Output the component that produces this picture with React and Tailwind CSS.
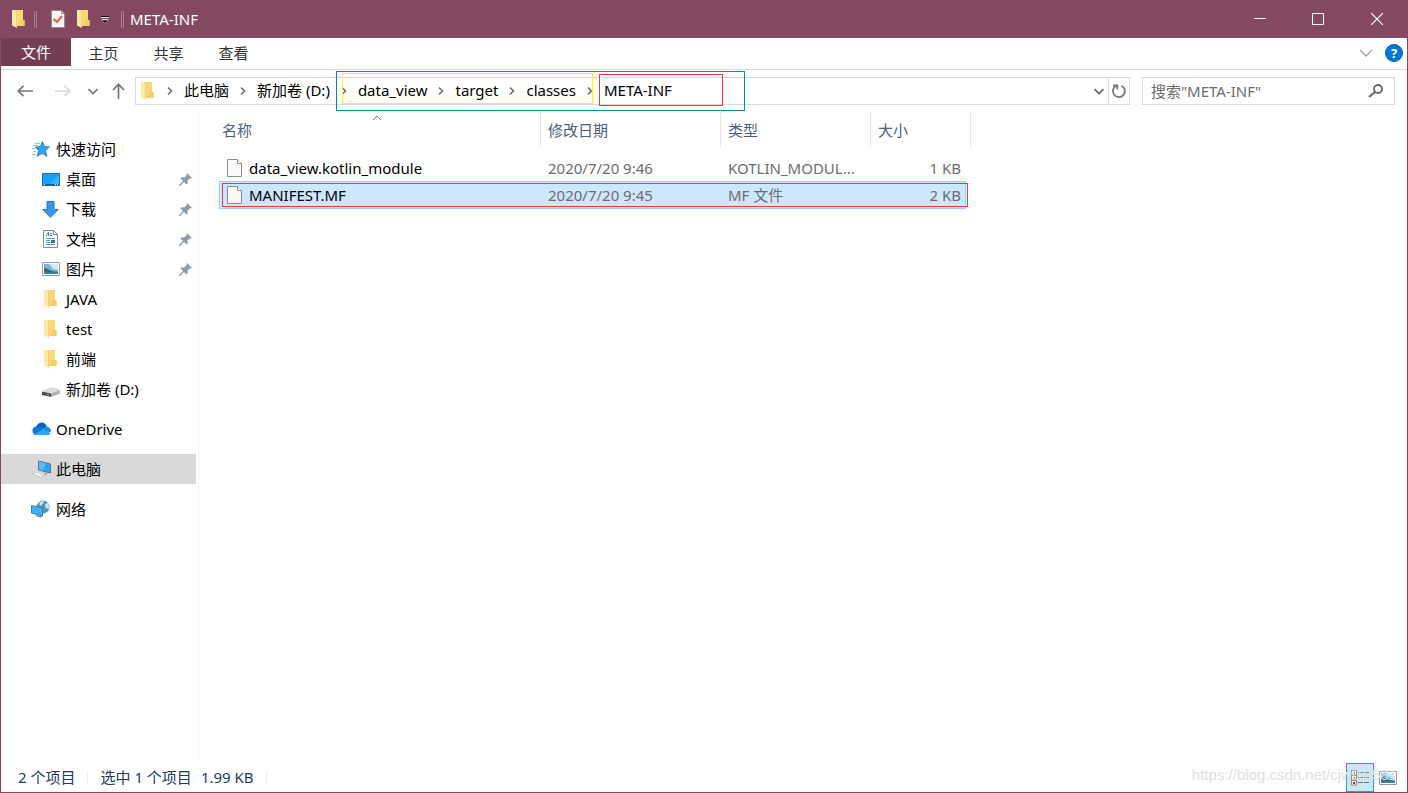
import clsx from 'clsx';

const Svg = ({ w, h, className, children }) => (
  <svg width={w} height={h} viewBox={`0 0 ${w} ${h}`} className={clsx('block shrink-0', className)} aria-hidden="true">
    {children}
  </svg>
);

const FolderIcon = ({ className }) => (
  <Svg w={14} h={18} className={className}>
    <path d="M3 0h8v10h1.500v6H3z" fill="#f8d775" />
    <path d="M9 10h3.500v6H6z" fill="#f4cd66" />
    <path d="M0 0h2.500L5 2.500V18L0 15.500z" fill="#ffe9a6" />
    <path d="M4.500 2.500V17.500" stroke="#edc766" strokeWidth=".7" />
  </Svg>
);

const FileIcon = () => (
  <Svg w={15} h={18}>
    <path d="M.5.5h10l4 4v13H.5z" fill="#f9f9f9" stroke="#8c8c8c" />
    <path d="M10.500.5v4h4" fill="#fff" stroke="#8c8c8c" />
  </Svg>
);

const PropertiesIcon = () => (
  <Svg w={14} h={18}>
    <path d="M.5.5h10l3 3v14H.5z" fill="#f8f8f8" stroke="#8f8f8f" />
    <path d="M10.500.5v3h3z" fill="#ddd" stroke="#8f8f8f" />
    <path d="m2.500 9 3.500 3 5-6" fill="none" stroke="#e8622c" strokeWidth="2" />
  </Svg>
);

const Chevron = ({ dir = 'right', className }) => (
  <Svg w={10} h={10} className={className}>
    <path
      d={dir === 'right' ? 'M3 1.500 6.500 5 3 8.500' : 'M.500 3 5 7.500 9.500 3'}
      fill="none"
      stroke="currentColor"
      strokeWidth="1.7"
    />
  </Svg>
);

const StarIcon = () => (
  <Svg w={18} h={16}>
    <path d="m10.500.500 2 5 5 .3-4 3.700 1.400 5.800-4.900-3-4.800 3 1.400-5.600L3.500 6l4.800-.5z" fill="#2ea3ea" stroke="#1a7fc4" strokeWidth=".8" />
    <path d="M3 2.500h5M1 4.500h5M0 7.500h3M1 10.500h3M0 13.500h4" stroke="#7ec4ee" />
  </Svg>
);

const DesktopIcon = () => (
  <Svg w={18} h={13}>
    <path d="M.5.5h17v12H.5z" fill="#1a9fff" stroke="#1572b8" />
    <path d="M8 11 17 2v9z" fill="#3db1ff" />
    <path d="M1 11.500h16" stroke="#0b5a9e" />
    <path d="M2 11.500h1M13 11.500h1M15 11.500h1" stroke="#fff" />
  </Svg>
);

const DownloadIcon = () => (
  <Svg w={17} h={17}>
    <path d="M5 .5h7v8h4.200L8.500 16.300.8 8.500H5z" fill="#3c96e6" stroke="#2878c8" />
  </Svg>
);

const DocumentIcon = () => (
  <Svg w={15} h={18}>
    <path d="M.5.5h10l4 4v13H.5z" fill="#fff" stroke="#8c8c8c" />
    <path d="M10.500.5v4h4" fill="none" stroke="#8c8c8c" />
    <path d="M3 6l2.500-4v4M7 3.500h2M7 5.500h2" fill="none" stroke="#2b8ac9" />
    <path d="M3 8.500h9M3 10.500h4M3 12.500h4M3 14.500h9" stroke="#55a0cf" />
    <path d="M8 10h4v3H8z" fill="#3d6f94" />
  </Svg>
);

const PictureIcon = () => (
  <Svg w={18} h={14}>
    <path d="M.5.5h17v13H.5z" fill="#fff" stroke="#9c9c9c" />
    <path d="M2 2h14v10H2z" fill="#6db5ee" />
    <path d="M7 2h9v6l-5-1z" fill="#d3eafa" />
    <path d="M2 5.500c3 .5 5 3 8 3.500l6 1V11H2z" fill="#396b58" />
    <path d="M2 10.500h14V12H2z" fill="#3c86bd" />
  </Svg>
);

const DriveIcon = () => (
  <Svg w={18} h={10} className="mt-[6px]">
    <path d="M0 4.500 8 .5h5l5 2.500-9 3.500z" fill="#dcdcdc" />
    <path d="m0 4.500 9 2V10L0 8z" fill="#4d4d4d" />
    <path d="m9 6.500 9-3.500v3.500L9 10z" fill="#b0b0b0" />
    <path d="M5 7.500 7 8" stroke="#4be04b" strokeWidth="1.200" />
  </Svg>
);

const OneDriveIcon = () => (
  <Svg w={20} h={14}>
    <path d="M5 5C7-.5 14-1.500 16 5l-6 4z" fill="#0a63b5" />
    <path d="M4.500 13A4.400 4.400 0 0 1 5 4.500c3-.3 5 2 8 3.500l-7 5z" fill="#0f7ad6" />
    <path d="M10 7.500 14 5c4-1 6 2 6 4.500l-3 1z" fill="#1490df" />
    <path d="M2.500 12.300 12 7.500l7.500 3.500c-.5 1.500-1.500 2-3 2h-12z" fill="#28a8ea" />
  </Svg>
);

const ComputerIcon = () => (
  <Svg w={20} h={18}>
    <path d="m7.500 1 12 3v9l-12-3z" fill="#2da5f5" stroke="#63737e" />
    <path d="m8 1.500 7 1.800-3 7.200-4-1z" fill="#58bbfa" />
    <path d="m13 12.500 3 1.300-3 1.200" fill="none" stroke="#8fa0ab" />
    <path d="m1 13.500 5-1.500 6 3.500-2 1.500z" fill="#f3f5f6" stroke="#aab4ba" strokeWidth=".7" strokeDasharray="2 1" />
  </Svg>
);

const NetworkIcon = () => (
  <Svg w={19} h={18}>
    <circle cx="12" cy="7" r="6.500" fill="#4f93b8" />
    <path d="M8 3c2-2 4-2 5-2l-1 3-3 2zM14 4l3-1c1 2 1.500 4 .5 6l-3-1z" fill="#c5e3ee" />
    <path d="m.5 5.500 11 2.500v8L.5 13z" fill="#3db0f8" stroke="#3f7ea8" />
    <path d="m5 15.500 6 1.700" stroke="#7d8b94" strokeWidth="1.300" />
  </Svg>
);

const PinIcon = () => (
  <Svg w={13} h={13}>
    <path d="m8 0 5 5-1.500.5-.5-.3-2.500 2.600.2 2.700-1.200 1L5 9l-4 4H0v-1l4-4-2.500-2.500 1-1.200 2.700.2L7.800 2 7.500 1z" fill="#8f9ba5" />
  </Svg>
);

const HelpIcon = () => (
  <span className="flex size-[18px] items-center justify-center rounded-full border border-[#0a5fae] bg-[#0078d7] text-[13px] font-bold text-white">?</span>
);

const quickAccess = [
  { label: '桌面', icon: DesktopIcon, pinned: true },
  { label: '下载', icon: DownloadIcon, pinned: true },
  { label: '文档', icon: DocumentIcon, pinned: true },
  { label: '图片', icon: PictureIcon, pinned: true },
  { label: 'JAVA', icon: FolderIcon },
  { label: 'test', icon: FolderIcon },
  { label: '前端', icon: FolderIcon },
  { label: '新加卷 (D:)', icon: DriveIcon },
];

const roots = [
  { label: 'OneDrive', icon: OneDriveIcon },
  { label: '此电脑', icon: ComputerIcon, active: true },
  { label: '网络', icon: NetworkIcon },
];

const files = [
  { name: 'data_view.kotlin_module', date: '2020/7/20 9:46', type: 'KOTLIN_MODUL...', size: '1 KB' },
  { name: 'MANIFEST.MF', date: '2020/7/20 9:45', type: 'MF 文件', size: '2 KB' },
];

const TitleBar = () => (
  <header className="flex h-[38px] items-center bg-[#844860] text-white">
    <div className="flex flex-1 items-center pl-[11px]">
      <FolderIcon />
      <span className="ml-2 h-[17px] w-[3px] border-x border-[#a88293]" />
      <button aria-label="属性" className="ml-[14px]"><PropertiesIcon /></button>
      <button aria-label="新建文件夹" className="ml-3"><FolderIcon /></button>
      <button aria-label="自定义快速访问工具栏" className="ml-[10px]">
        <Svg w={8} h={10}>
          <path d="M0 2.500h8" stroke="#111" />
          <path d="M0 3.500h8M1 5.500h6" stroke="#e8dde1" />
          <path d="M.5 6h7L4 9.500z" fill="#111" stroke="#d0bcc5" strokeWidth=".6" />
        </Svg>
      </button>
      <span className="ml-3 h-[17px] w-[3px] border-x border-[#a88293]" />
      <h1 className="ml-[6px]">META-INF</h1>
    </div>
    <button aria-label="最小化" className="flex h-full w-[58px] items-center justify-center">
      <Svg w={12} h={12}><path d="M0 5.500h12" stroke="#fff" /></Svg>
    </button>
    <button aria-label="最大化" className="flex h-full w-[58px] items-center justify-center">
      <Svg w={12} h={12}><path d="M.5.5h11v11H.5z" fill="none" stroke="#fff" /></Svg>
    </button>
    <button aria-label="关闭" className="flex h-full w-[60px] items-center justify-center">
      <Svg w={12} h={12}><path d="m0 0 12 12M12 0 0 12" stroke="#fff" strokeWidth="1.200" /></Svg>
    </button>
  </header>
);

const Ribbon = () => (
  <nav className="flex h-8 items-start border-b border-[#dadbdc] text-[#333]">
    <button className="h-7 w-[70px] bg-[#733d54] text-white">文件</button>
    {['主页', '共享', '查看'].map((tab) => (
      <button key={tab} className="h-[30px] w-[65px]">{tab}</button>
    ))}
    <div className="ml-auto flex h-[30px] items-center gap-2 pr-1">
      <button aria-label="展开功能区" className="p-1">
        <Svg w={14} h={8}><path d="m1 1 6 6 6-6" fill="none" stroke="#a0a0a0" strokeWidth="1.300" /></Svg>
      </button>
      <button aria-label="帮助"><HelpIcon /></button>
    </div>
  </nav>
);

const Crumb = ({ label }) => <button className="pb-[2px]">{label}</button>;

const CrumbArrow = () => (
  <span className="flex w-7 justify-center text-[#707070]"><Chevron /></span>
);

const AddressBar = () => (
  <div className="flex h-[42px] items-center pr-3 pl-4">
    <div className="flex w-[118px] items-center text-[#777]">
      <button aria-label="后退">
        <Svg w={16} h={12}><path d="M16 6H1M6.500.8 1.200 6l5.300 5.200" fill="none" stroke="currentColor" strokeWidth="1.700" /></Svg>
      </button>
      <button aria-label="前进" className="ml-[22px] text-[#d8d8d8]">
        <Svg w={16} h={12}><path d="M0 6h15M9.500.8 14.800 6l-5.300 5.200" fill="none" stroke="currentColor" strokeWidth="1.700" /></Svg>
      </button>
      <button aria-label="最近浏览的位置" className="ml-[17px]"><Chevron dir="down" /></button>
      <button aria-label="上移" className="ml-[14px]">
        <Svg w={13} h={16}><path d="M6.500 16V1M1 7l5.500-5.700L12 7" fill="none" stroke="currentColor" strokeWidth="1.700" /></Svg>
      </button>
    </div>
    <div className="flex h-7 flex-1 items-center border border-[#d9d9d9] text-black">
      <FolderIcon className="mr-px ml-[5px]" />
      <CrumbArrow />
      <Crumb label="此电脑" />
      <CrumbArrow />
      <Crumb label="新加卷 (D:)" />
      <div className="relative flex items-center">
        <CrumbArrow />
        <Crumb label="data_view" />
        <CrumbArrow />
        <Crumb label="target" />
        <CrumbArrow />
        <Crumb label="classes" />
        <CrumbArrow />
        <Crumb label="META-INF" />
        <span className="pointer-events-none absolute -top-[9px] left-[6px] h-10 w-[409px] border border-[#009090]" />
        <span className="pointer-events-none absolute -top-[7px] left-3 h-[31px] w-[251px] border border-[#ffff00]" />
        <span className="pointer-events-none absolute -top-[6px] left-[269px] h-8 w-[124px] border border-[#f33]" />
      </div>
      <button aria-label="上一个位置" className="ml-auto p-1 text-[#666]"><Chevron dir="down" /></button>
      <button aria-label="刷新" className="flex h-full w-[21px] items-center justify-center border-l border-[#d9d9d9]">
        <Svg w={16} h={16}>
          <path d="M10.500 2.700a6 6 0 1 1-5-.1M2 2.400h4.300v4.100" fill="none" stroke="#777" strokeWidth="1.800" />
        </Svg>
      </button>
    </div>
    <label className="ml-3 flex h-7 w-[253px] items-center border border-[#d9d9d9] px-2">
      <input aria-label="搜索" placeholder={'搜索"META-INF"'} className="min-w-0 flex-1 outline-none placeholder:text-[#6d6d6d]" />
      <Svg w={18} h={16}>
        <circle cx="10" cy="6" r="4" fill="none" stroke="#666" strokeWidth="1.800" />
        <path d="m7 9-6 5" stroke="#666" strokeWidth="2.200" />
      </Svg>
    </label>
  </div>
);

const Sidebar = () => (
  <aside className="w-[198px] shrink-0 border-r border-[#f5f5f5] pt-[22px] text-black">
    <a href="#quick" className="flex h-[30px] items-center pl-[31px]">
      <span className="flex w-6 items-center"><StarIcon /></span>
      快速访问
    </a>
    {quickAccess.map(({ label, icon: Icon, pinned }) => (
      <a key={label} href="#folder" className="flex h-[30px] items-center pr-[6px] pl-10">
        <span className="mr-[6px] flex w-[19px] items-center justify-center"><Icon /></span>
        {label}
        {pinned && <span className="ml-auto"><PinIcon /></span>}
      </a>
    ))}
    {roots.map(({ label, icon: Icon, active }) => (
      <a key={label} href="#root" className={clsx('mt-[10px] mr-[2px] flex h-[30px] items-center pl-[30px]', active && 'bg-[#d9d9d9]')}>
        <span className="mr-[5px] flex w-5 items-center"><Icon /></span>
        {label}
      </a>
    ))}
  </aside>
);

const FileList = () => (
  <main className="min-w-0 flex-1 pl-5">
    <div className="relative isolate w-[752px]">
      <table className="w-full table-fixed border-separate border-spacing-0 text-left">
        <colgroup>
          <col className="w-[322px]" />
          <col className="w-[180px]" />
          <col className="w-[150px]" />
          <col className="w-[100px]" />
        </colgroup>
        <thead className="text-[#4c607a]">
          <tr className="h-[35px]">
            {['名称', '修改日期', '类型', '大小'].map((title, index) => (
              <th key={title} className={clsx('border-r border-[#e5e5e5] font-normal', index === 0 ? 'pl-[3px]' : 'pl-[7px]')}>{title}</th>
            ))}
          </tr>
        </thead>
        <tbody className="text-[#6d6d6d]">
          <tr className="h-2"><td colSpan={4} /></tr>
          {files.map((file) => (
            <tr key={file.name} className="h-[27px]">
              <td className="p-0 pb-[2px] pl-2 text-black">
                <span className="flex items-center gap-[7px]"><FileIcon />{file.name}</span>
              </td>
              <td className="p-0 pb-[2px] pl-[7px]">{file.date}</td>
              <td className="p-0 pb-[2px] pl-[7px]">{file.type}</td>
              <td className="p-0 pr-[10px] pb-[2px] text-right">{file.size}</td>
            </tr>
          ))}
        </tbody>
      </table>
      <Svg w={10} h={6} className="absolute top-[3px] left-[153px]"><path d="m1 5 4-4 4 4" fill="none" stroke="#777" /></Svg>
      {/* selected row highlight and its red marker */}
      <span className="pointer-events-none absolute bottom-0 left-0 -z-10 h-7 w-[747px] border border-[#99d1ff] bg-[#cce8ff]" />
      <span className="pointer-events-none absolute bottom-[2px] left-[3px] h-6 w-[746px] border border-[#f33]" />
    </div>
  </main>
);

const StatusBar = () => (
  <footer className="relative flex h-[29px] items-center pr-[10px] pl-[17px] text-[#1e395b]">
    <span className="pb-[2px]">2 个项目</span>
    <span className="mx-3 h-3 w-px bg-[#ececec]" />
    <span className="pb-[2px]">选中 1 个项目</span>
    <span className="ml-[9px] pb-[2px]">1.99 KB</span>
    <span className="ml-3 h-3 w-px bg-[#ececec]" />
    <button aria-label="详细信息" className="ml-auto flex h-[29px] w-7 items-center justify-center border border-[#26a0da] bg-[#cbe8f6]">
      <Svg w={18} h={16}>
        <path d="M.5.500h5v4.500h-5zM.5 5.500h5V10h-5zM.5 10.500h5V15h-5z" fill="#fff" stroke="#888" />
        <path d="M2 2h2v2H2z" fill="#347" />
        <path d="M2 7h2v2H2z" fill="#a63" />
        <path d="M2 12h2v2H2z" fill="#c22" />
        <path d="M7 2.500h5M13 2.500h5M7 7.500h5M13 7.500h5M7 12.500h5M13 12.500h5" stroke="#777" />
      </Svg>
    </button>
    <button aria-label="大图标" className="ml-[5px] flex h-full items-center"><PictureIcon /></button>
    <span className="pointer-events-none absolute right-[10px] pb-[6px] font-['Liberation_Sans'] text-[#e0e0e0]">https://blog.csdn.net/cjwl12581</span>
  </footer>
);

const App = () => (
  <div className="flex min-h-screen flex-col border border-t-0 border-[#844860] bg-white font-['Noto_Sans','Noto_Sans_CJK_SC',sans-serif] text-[15px] leading-5">
    <TitleBar />
    <Ribbon />
    <AddressBar />
    <div className="flex flex-1">
      <Sidebar />
      <FileList />
    </div>
    <StatusBar />
  </div>
);

export default App;
